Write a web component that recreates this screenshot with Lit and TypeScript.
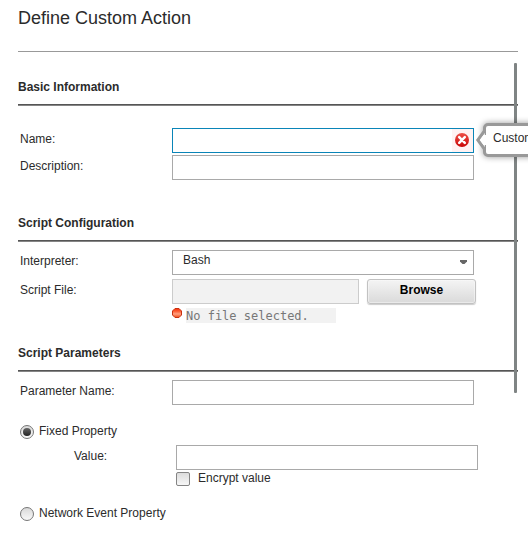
import { LitElement, html, css } from "lit";
import { customElement } from "lit/decorators.js";

@customElement("app-root")
export class AppRoot extends LitElement {
  static styles = css`
    :host {
      display: block;
      position: relative;
      width: 528px;
      height: 544px;
      overflow: hidden;
      background: #fff;
      color: #2b2b2b;
      font: 12px/14px "Liberation Sans", Arial, sans-serif;
    }
    *, *::before, *::after { box-sizing: border-box; }
    .form { width: 500px; margin-left: 18px; display: flex; flex-direction: column; }
    h1 {
      margin: 0;
      height: 52px;
      padding-top: 8px;
      font-size: 18px;
      line-height: 20px;
      font-weight: 400;
      border-bottom: 1px solid #999;
    }
    h2 {
      margin: 28px 0 0;
      height: 26px;
      font-size: 12px;
      line-height: 14px;
      font-weight: 700;
      background: linear-gradient(#858585, #858585) 0 100% / 100% 1px no-repeat;
    }
    h2::after { content: ""; display: block; height: 1px; background: #555; margin-top: 10px; }
    .row { display: grid; grid-template-columns: 152px 1fr; padding-left: 2px; height: 25px; }
    .row label { padding-top: 4px; }
    .box { display: flex; width: 302px; height: 25px; border: 1px solid #a9a9a9; background: #fff; }
    .basic { margin-top: 22px; display: grid; gap: 2px; }
    .focus { border-color: #0a85b8; justify-content: flex-end; }
    .err { width: 21px; background: #fff2f2; padding: 4px 0 0 3px; }
    svg { display: block; }
    .config { margin-top: 36px; }
    .rows { margin-top: 8px; display: grid; gap: 4px; }
    .select { justify-content: space-between; padding: 2px 5px 0 10px; }
    .select svg { margin-top: 7px; }
    .file { display: flex; gap: 8px; }
    .disabled { width: 187px; background: #f2f2f2; border-color: #ccc; }
    .button {
      width: 109px;
      height: 25px;
      border: 1px solid #c2c2c2;
      border-radius: 3px;
      background: linear-gradient(#f4f4f4, #dadada);
      box-shadow: inset 0 0 0 1px #fafafa80, 0 1px 1px #0003;
      color: #000;
      font-weight: 700;
      text-align: center;
      padding-top: 3px;
    }
    .status { margin: 4px 0 0 154px; display: flex; gap: 4px; height: 15px; }
    .message {
      width: 150px;
      background: #f2f2f2;
      color: #777;
      font: 12px/17px "DejaVu Sans Mono", monospace;
    }
    .params { margin-top: 23px; }
    .option { display: flex; gap: 5px; margin-left: 2px; height: 14px; }
    .option span { margin-top: -1px; }
    .fixed { margin-top: 20px; }
    .value { margin: 6px 0 0 56px; display: grid; grid-template-columns: 102px 302px; }
    .value label { padding-top: 4px; }
    .check { display: flex; gap: 8px; margin: 2px 0 0 158px; height: 14px; }
    .check i {
      width: 14px;
      height: 14px;
      border: 1px solid #848484;
      border-radius: 2px;
      background: linear-gradient(#dcdcdc, #f7f7f7);
    }
    .check span { margin-top: -1px; }
    .network { margin-top: 21px; }
    .scroll { position: absolute; left: 514px; top: 63px; width: 3px; height: 330px; border-radius: 1px; background: #7f8484; }
    .tip {
      position: absolute;
      left: 483px;
      top: 123px;
      width: 80px;
      height: 34px;
      border: 3px solid #999;
      border-radius: 5px;
      background: #fff;
      box-shadow: 0 0 6px #0006;
      padding: 5px 0 0 7px;
      white-space: nowrap;
    }
    .tip svg { position: absolute; left: -11px; top: 3px; }
  `;

  private radio(on: boolean) {
    return html`<svg width="14" height="14" viewBox="0 0 14 14">
      <defs>
        <linearGradient id="ring" x2="0" y2="1"><stop stop-color="#d8d8d8" /><stop offset="1" stop-color="#fafafa" /></linearGradient>
        <linearGradient id="dot" x2="0" y2="1"><stop stop-color="#666" /><stop offset="1" stop-color="#222" /></linearGradient>
      </defs>
      <circle cx="7" cy="7" r="6.5" fill="url(#ring)" stroke="#777" />
      <circle cx="7" cy="7" r=${on ? 4 : 0} fill="url(#dot)" />
    </svg>`;
  }

  render() {
    return html`
      <div class="form">
        <h1>Define Custom Action</h1>
        <h2>Basic Information</h2>
        <div class="basic">
          <div class="row">
            <label>Name:</label>
            <div class="box focus"><div class="err">
              <svg width="14" height="14" viewBox="0 0 14 14">
                <defs><linearGradient id="red" x2="0" y2="1"><stop stop-color="#ee5048" /><stop offset="1" stop-color="#c90505" /></linearGradient></defs>
                <circle cx="7" cy="7" r="7" fill="url(#red)" />
                <path d="M4.2 4.2l5.6 5.6M9.8 4.2l-5.6 5.6" stroke="#fff" stroke-width="2.5" stroke-linecap="round" />
              </svg>
            </div></div>
          </div>
          <div class="row"><label>Description:</label><div class="box"></div></div>
        </div>
        <h2 class="config">Script Configuration</h2>
        <div class="rows">
          <div class="row">
            <label>Interpreter:</label>
            <div class="box select"><span>Bash</span>
              <svg width="9" height="5" viewBox="0 0 9 5"><path d="M1 0h7v1.4L5.5 4h-2L1 1.4z" fill="#666" /></svg>
            </div>
          </div>
          <div class="row">
            <label>Script File:</label>
            <div class="file"><div class="box disabled"></div><div class="button">Browse</div></div>
          </div>
        </div>
        <div class="status">
          <svg width="10" height="10" viewBox="0 0 10 10">
            <defs><linearGradient id="orb" x2="0" y2="1"><stop stop-color="#f8300a" /><stop offset=".3" stop-color="#fb5a30" /><stop offset=".6" stop-color="#ffa080" /><stop offset="1" stop-color="#f04a14" /></linearGradient></defs>
            <path d="M3 .5h4L9.5 3v4L7 9.5H3L.5 7V3z" fill="url(#orb)" stroke="#c8300f" />
          </svg>
          <span class="message">No file selected.</span>
        </div>
        <h2 class="params">Script Parameters</h2>
        <div class="rows"><div class="row"><label>Parameter Name:</label><div class="box"></div></div></div>
        <div class="option fixed">${this.radio(true)}<span>Fixed Property</span></div>
        <div class="value"><label>Value:</label><div class="box"></div></div>
        <div class="check"><i></i><span>Encrypt value</span></div>
        <div class="option network">${this.radio(false)}<span>Network Event Property</span></div>
      </div>
      <div class="scroll"></div>
      <div class="tip">
        <svg width="12" height="22" viewBox="0 0 12 22"><path d="M9.8 1.5L2.8 11l7 9.5" fill="#fff" stroke="#999" stroke-width="3" /><path d="M12 6v10H8.6L5 11l3.6-5z" fill="#fff" /></svg>
        Custom
      </div>
    `;
  }
}
